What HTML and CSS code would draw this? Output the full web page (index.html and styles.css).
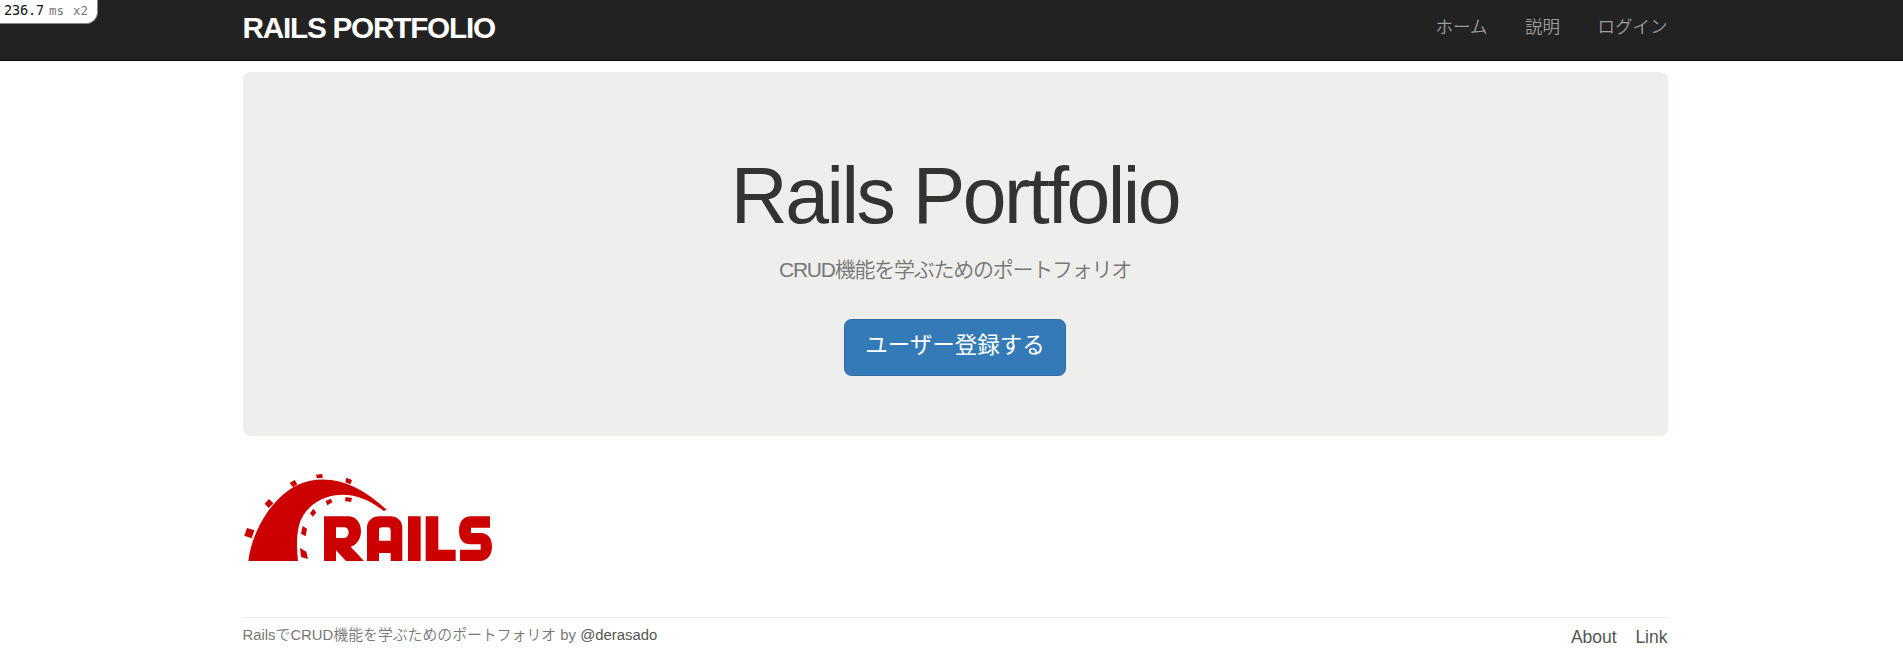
FILE: index.html
```html
<!DOCTYPE html>
<html lang="ja">
<head>
<meta charset="utf-8">
<title>Rails Portfolio</title>
<link rel="stylesheet" href="styles.css">
</head>
<body>
<div class="profiler"><span class="profiler-time">236.7</span><span class="profiler-unit">ms</span><span class="profiler-count">x2</span></div>
<header class="navbar">
  <div class="container navbar-inner">
    <a class="brand">RAILS PORTFOLIO</a>
    <nav class="nav"><a>ホーム</a><a>説明</a><a>ログイン</a></nav>
  </div>
</header>
<main class="container">
  <section class="jumbotron">
    <h1 class="title">Rails Portfolio</h1>
    <h2 class="subtitle">CRUD機能を学ぶためのポートフォリオ</h2>
    <a class="button">ユーザー登録する</a>
  </section>
  <svg class="logo" viewBox="24 24 750 267" role="img" aria-label="Rails">
    <g fill="#c00">
      <path d="M40 288C46 238 66 187 96 143C132 91 178 56 226 47C307 32 382 67 455 134L446 138C400 101 352 84 301 91C246 99 207 133 193 178C184 210 185 250 189 288Z"/>
      <path d="M36 189L58 196L50 220L28 212ZM102 102L115 115L101 129L89 116ZM179 45L187 58L174 67L164 54ZM243 29L261 27L264 38L246 40ZM334 38L351 45L347 58L331 52ZM332 96L351 99L348 111L330 108ZM272 108L288 101L292 112L277 121ZM235 131L244 143L233 155L225 145ZM203 183L216 191L212 214L198 206ZM195 249L214 260L219 282L198 276Z"/>
      <path fill-rule="evenodd" d="M267 154H340C361 154 378 172 378 198C378 220 367 239 347 245L387 288H333L303 256V288H267ZM303 187V219H329C345 217 345 188 329 187Z"/>
      <path fill-rule="evenodd" d="M396 288V188C396 168 412 154 433 154H466C487 154 502 168 502 188V288H467V264H432V288ZM432 227H467V196Q467 187 458 187H441Q432 187 432 196Z"/>
      <path d="M519 154H557V288H519ZM572 154H610V254H662V288H572ZM765 154V188H708V204H737C759 204 771 221 771 244C771 270 758 288 735 288H675V254H737V238H707C685 238 672 224 672 198C672 170 685 154 708 154Z"/>
    </g>
  </svg>
  <footer class="footer">
    <small class="credit">RailsでCRUD機能を学ぶためのポートフォリオ by <a>@derasado</a></small>
    <nav class="footer-nav"><a>About</a><a>Link</a></nav>
  </footer>
</main>
</body>
</html>
```
FILE: styles.css
```css
* { box-sizing: border-box; }
body {
  margin: 0;
  background: #fff;
  color: #333;
  font: 17.5px/25px "Liberation Sans", "Noto Sans CJK JP", sans-serif;
  height: 670px;
  overflow: hidden;
}
.container { width: 1425px; margin-left: 242.5px; }
.navbar { height: 61px; background: #222; border-bottom: 1px solid #090909; }
.navbar-inner { display: flex; justify-content: space-between; }
.brand {
  padding-top: 10px;
  color: #fff;
  font-size: 29.75px;
  line-height: 36px;
  font-weight: 700;
  letter-spacing: -1.25px;
}
.nav { display: flex; gap: 37.5px; padding-top: 15px; color: #9d9d9d; font-weight: 350; }
.profiler {
  position: absolute;
  top: 0;
  left: 0;
  width: 98px;
  height: 24px;
  padding: 0 0 0 4px;
  background: #fff;
  border: solid #888;
  border-width: 0 1px 1px 0;
  border-radius: 0 0 12px 0;
  font: 13.5px/21px "DejaVu Sans Mono", monospace;
  display: flex;
}
.profiler-time { width: 45px; color: #111; letter-spacing: -.1px; }
.profiler-unit { width: 24px; color: #777; font-size: 12.5px; }
.profiler-count { color: #777; font-size: 12.5px; }
.jumbotron {
  display: flex;
  flex-direction: column;
  align-items: center;
  height: 364px;
  margin-top: 11px;
  padding-top: 80px;
  background: #eeeeec;
  border-radius: 7.5px;
}
.title { margin: 0; font-size: 78.75px; line-height: 88px; font-weight: 400; letter-spacing: -2.5px; }
.subtitle { margin: 15px 0 0; font-size: 21px; line-height: 30px; font-weight: 350; letter-spacing: -1.25px; color: #777; }
.button {
  width: 222px;
  height: 57px;
  margin-top: 34px;
  color: #fff;
  background: #337ab7;
  border: 1px solid #2e6da4;
  border-radius: 7.5px;
  font-size: 22.5px;
  line-height: 51px;
  text-align: center;
}
.logo { display: block; width: 250px; height: 89px; margin-top: 37px; }
.footer {
  display: flex;
  justify-content: space-between;
  height: 52px;
  margin-top: 55px;
  border-top: 1px solid #eaeaea;
  color: #777;
}
.credit { padding-top: 5px; font-size: 14.875px; font-weight: 350; }
.credit a, .footer-nav a { color: #555; }
.footer-nav { display: flex; gap: 18.75px; padding-top: 7px; }
```
